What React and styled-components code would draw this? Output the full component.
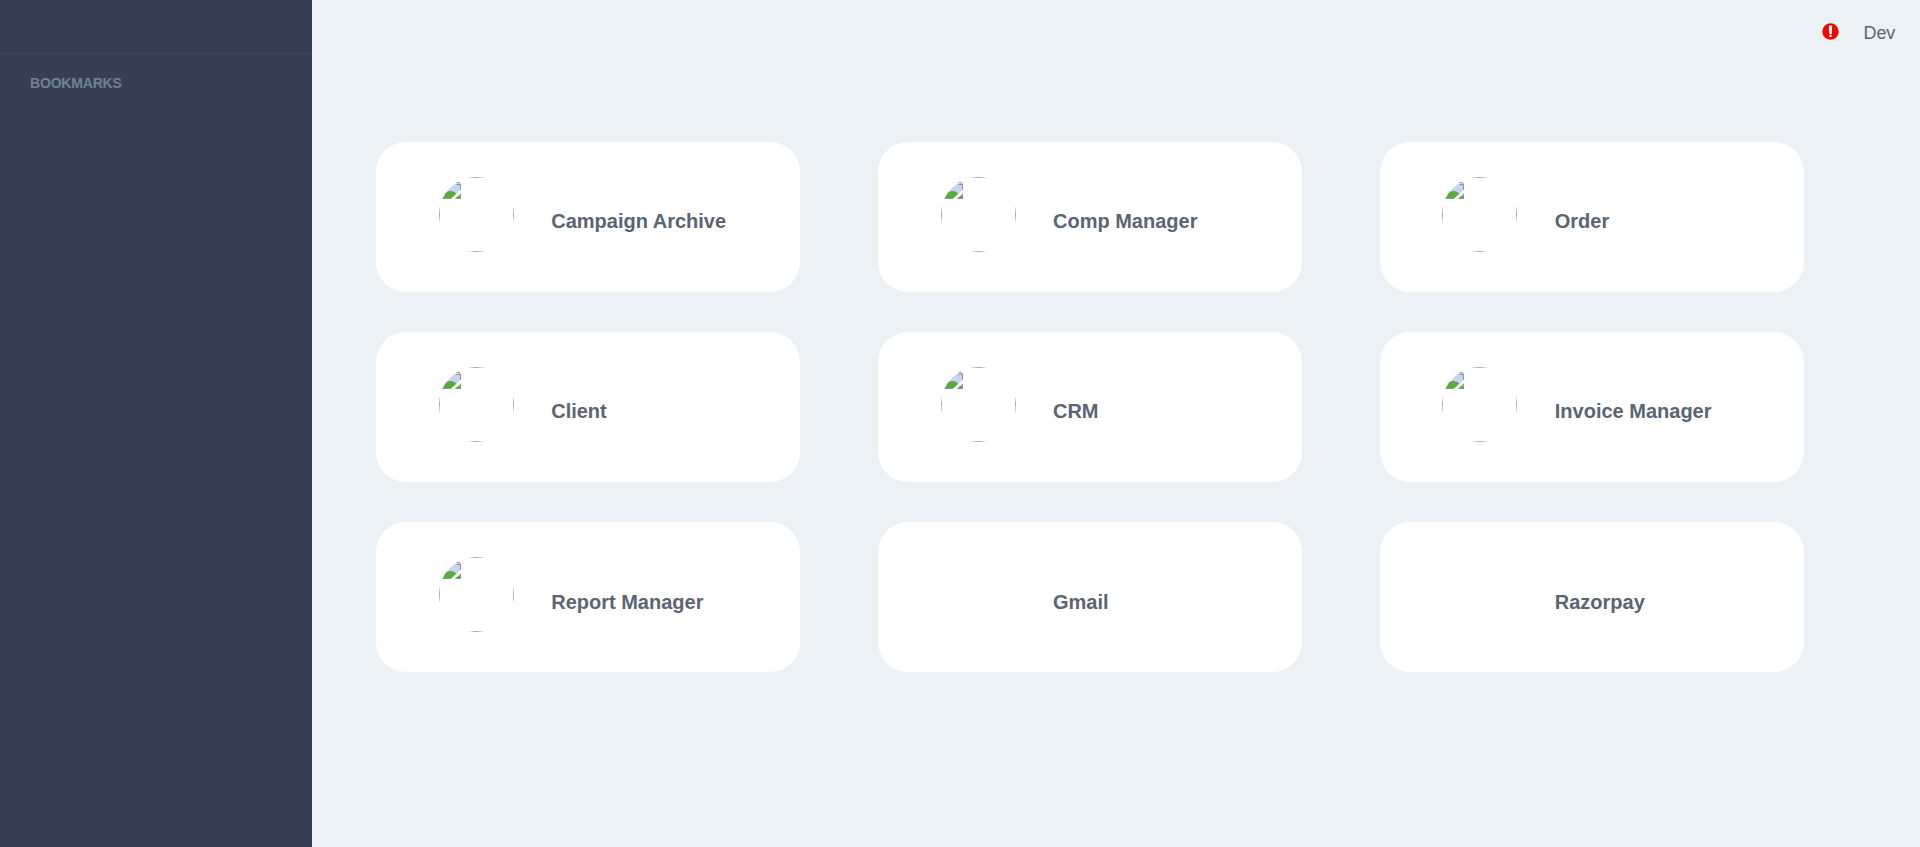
import React from "react";
import styled, { createGlobalStyle } from "styled-components";

const GlobalStyle = createGlobalStyle`
  * { box-sizing: border-box; }
  body {
    margin: 0;
    background: #ecf1f6;
    color: #5b6572;
    font-family: "Liberation Sans", Arial, sans-serif;
  }
`;

const Layout = styled.div`
  display: flex;
  height: 100vh;
  overflow: hidden;
`;

const Sidebar = styled.aside`
  flex: 0 0 312px;
  background: #364052;
`;

const SidebarHeader = styled.div`
  height: 51px;
  border-bottom: 1px solid #2d3646;
`;

const SidebarTitle = styled.h2`
  margin: 0;
  padding: 22px 30px 0;
  color: #708097;
  font-size: 14px;
  font-weight: 700;
  letter-spacing: -0.18px;
  line-height: 20px;
  text-transform: uppercase;
`;

const Main = styled.main`
  flex: 1;
  min-width: 0;
`;

const TopBar = styled.header`
  display: flex;
  justify-content: flex-end;
  align-items: flex-start;
  gap: 25px;
  height: 64px;
  padding: 23px 25px 0 0;
`;

const AlertBadge = styled.span`
  display: flex;
  width: 18px;
  height: 17px;
  background: #f7f3f5;
`;

const UserName = styled.span`
  font-size: 18px;
  letter-spacing: -0.2px;
  line-height: 22px;
  margin-top: -1px;
`;

const AppGrid = styled.div`
  display: grid;
  grid-template-columns: repeat(3, 424px);
  grid-auto-rows: 150px;
  column-gap: 77.8px;
  row-gap: 40px;
  padding: 78px 0 0 64px;
`;

const AppCard = styled.article`
  display: flex;
  background: #fff;
  border-radius: 30px;
  padding: 35px 0 0 62.8px;
`;

const Avatar = styled.div`
  flex: 0 0 75px;
  height: 75px;
  border-radius: 50%;
  overflow: hidden;
`;

const AppName = styled.h3`
  margin: ${({ $lower }) => ($lower ? 33 : 32)}px 0 0 37.4px;
  font-size: 20px;
  font-weight: 700;
  line-height: 24px;
`;

const apps = [
  { name: "Campaign Archive", picture: true },
  { name: "Comp Manager", picture: true },
  { name: "Order", picture: true },
  { name: "Client", picture: true },
  { name: "CRM", picture: true },
  { name: "Invoice Manager", picture: true },
  { name: "Report Manager", picture: true, lower: true },
  { name: "Gmail", lower: true },
  { name: "Razorpay", lower: true },
];

const MissingPicture = () => (
  <svg width="75" height="75" viewBox="0 0 75 75" aria-hidden="true">
    <rect x="0.5" y="0.5" width="74" height="74" fill="none" stroke="#a8a8a8" />
    <path d="M2 2h15l5 6v14H2z" fill="#c5d6f5" />
    <path d="M2 22c2-9 13-11 17-3v3z" fill="#5aab3c" />
    <path d="M15 22l6-4v4z" fill="#5aab3c" />
    <path d="M17 4.500l1.500 3H22v-1.500l-3-3z" fill="#e9eaee" />
    <path d="M17 5.500h3l1.500 2v14M17.500 7.500h4M2 21.500h20" fill="none" stroke="#919197" />
    <path d="M11.500 24L23.500 13" stroke="#fff" strokeWidth="2.800" />
  </svg>
);

export default function App() {
  return (
    <Layout>
      <GlobalStyle />
      <Sidebar>
        <SidebarHeader />
        <SidebarTitle>Bookmarks</SidebarTitle>
      </Sidebar>
      <Main>
        <TopBar>
          <AlertBadge>
            <svg width="18" height="17" viewBox="0 0 18 17" aria-hidden="true">
              <circle cx="9.500" cy="8.500" r="8.200" fill="#f90000" />
              <path d="M7.800 2.500h3.400l-.5 8.500H8.300z" fill="#fff" />
              <circle cx="9.500" cy="12.900" r="1.400" fill="#fff" />
            </svg>
          </AlertBadge>
          <UserName>Dev</UserName>
        </TopBar>
        <AppGrid>
          {apps.map(({ name, picture, lower }) => (
            <AppCard key={name}>
              <Avatar>{picture && <MissingPicture />}</Avatar>
              <AppName $lower={lower}>{name}</AppName>
            </AppCard>
          ))}
        </AppGrid>
      </Main>
    </Layout>
  );
}
